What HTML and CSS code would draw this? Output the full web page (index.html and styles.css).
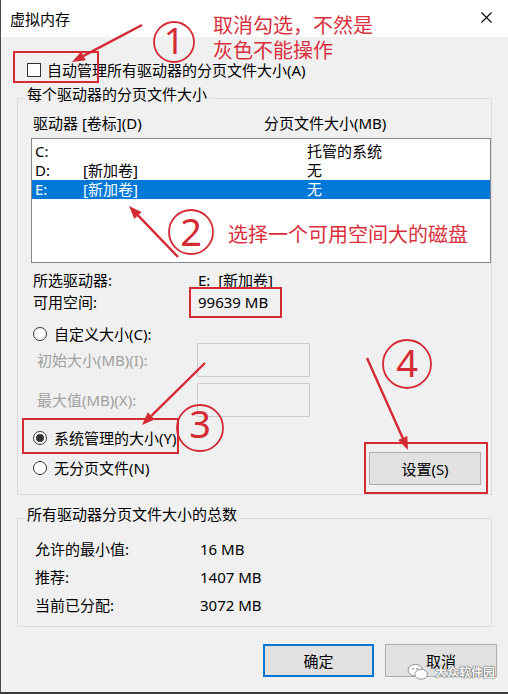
FILE: index.html
```html
<!DOCTYPE html>
<html lang="zh-CN">
<head>
<meta charset="utf-8">
<title>虚拟内存</title>
<link rel="stylesheet" href="styles.css">
</head>
<body>
<div class="window">
  <div class="titlebar">
    <span class="title">虚拟内存</span>
    <svg class="close" width="11" height="11" viewBox="0 0 11 11"><path d="M0.5 0.5 L10.5 10.5 M10.5 0.5 L0.5 10.5" stroke="#000" stroke-width="1.1" fill="none"/></svg>
  </div>

  <div class="check-row"><span class="checkbox"></span><span>自动管理所有驱动器的分页文件大小(A)</span></div>

  <div class="group group-drives">
    <div class="group-title">每个驱动器的分页文件大小</div>
    <div class="list-header"><span>驱动器 [卷标](D)</span><span>分页文件大小(MB)</span></div>
    <div class="listbox">
      <div class="row"><span>C:</span><span></span><span>托管的系统</span></div>
      <div class="row"><span>D:</span><span>[新加卷]</span><span>无</span></div>
      <div class="row selected"><span>E:</span><span>[新加卷]</span><span>无</span></div>
    </div>
    <div class="info">
      <span>所选驱动器:</span><span>E:&nbsp;&nbsp;[新加卷]</span>
      <span>可用空间:</span><span>99639 MB</span>
    </div>
    <div class="radio-row first-radio"><span class="radio"></span><span>自定义大小(C):</span></div>
    <div class="fields">
      <span class="disabled">初始大小(MB)(I):</span><span class="textbox"></span>
      <span class="disabled">最大值(MB)(X):</span><span class="textbox"></span>
    </div>
    <div class="bottom-row">
      <div class="radios">
        <div class="radio-row"><span class="radio checked"></span><span>系统管理的大小(Y)</span></div>
        <div class="radio-row"><span class="radio"></span><span>无分页文件(N)</span></div>
      </div>
      <button class="btn set-btn">设置(S)</button>
    </div>
  </div>

  <div class="group group-total">
    <div class="group-title">所有驱动器分页文件大小的总数</div>
    <div class="totals">
      <span>允许的最小值:</span><span>16 MB</span>
      <span>推荐:</span><span>1407 MB</span>
      <span>当前已分配:</span><span>3072 MB</span>
    </div>
  </div>

  <div class="actions">
    <button class="btn default-btn">确定</button>
    <button class="btn">取消</button>
  </div>
</div>

<svg class="annotations" width="508" height="694" viewBox="0 0 508 694">
  <g fill="none" stroke="#d42a34" stroke-width="2">
    <rect x="14" y="52" width="84" height="30"/>
    <rect x="190" y="288" width="91" height="29"/>
    <rect x="23" y="419" width="155" height="34"/>
    <rect x="365" y="443" width="122" height="50"/>
  </g>
  <g fill="none" stroke="#d42a34" stroke-width="1.8">
    <circle cx="174" cy="42" r="20"/>
    <circle cx="191" cy="232" r="22"/>
    <circle cx="200" cy="428" r="23"/>
    <circle cx="407" cy="364" r="24"/>
  </g>
  <g stroke="#d42a34" stroke-width="2.4" fill="none">
    <line x1="142" y1="25" x2="83.5" y2="55.9"/>
    <line x1="178" y1="257" x2="138" y2="215.4"/>
    <line x1="205" y1="363" x2="151.3" y2="415.9"/>
    <line x1="367" y1="358" x2="402.7" y2="438.1"/>
  </g>
  <g fill="#d42a34">
    <polygon points="72,62 81.2,51.5 85.8,60.3"/>
    <polygon points="129,206 141.6,211.9 134.4,218.9"/>
    <polygon points="142,425 147.8,412.3 154.8,419.5"/>
    <polygon points="408,450 398.1,440.1 407.3,436.1"/>
  </g>
  <g class="num" fill="#d42a34" text-anchor="middle">
    <text x="174" y="54" font-size="36">1</text>
    <text x="191" y="246" font-size="38">2</text>
    <text x="200" y="438" font-size="38">3</text>
    <text x="407" y="377" font-size="38">4</text>
  </g>
</svg>

<div class="note note-1">取消勾选，不然是<br>灰色不能操作</div>
<div class="note note-2">选择一个可用空间大的磁盘</div>

<div class="watermark">
  <svg width="22" height="18" viewBox="0 0 24 20"><ellipse cx="9" cy="8" rx="8" ry="6.5" fill="#fff" stroke="#8a8a8a" stroke-width="1"/><ellipse cx="15.5" cy="12.5" rx="7" ry="5.5" fill="#fff" stroke="#8a8a8a" stroke-width="1"/><circle cx="6.5" cy="6.5" r="1" fill="#8a8a8a"/><circle cx="11" cy="6.5" r="1" fill="#8a8a8a"/></svg>
  <span>大众软件园</span>
</div>
</body>
</html>
```
FILE: styles.css
```css
* { box-sizing: border-box; }
html, body { margin: 0; padding: 0; }
body {
  position: relative;
  width: 508px;
  height: 694px;
  overflow: hidden;
  background: #f0f0f0;
  font-family: "Noto Sans", "Noto Sans CJK SC", sans-serif;
  font-size: 15px;
  line-height: 20px;
  color: #000;
}
.window {
  height: 694px;
  border-left: 1px solid #4a4a4a;
  border-bottom: 2px solid #3a3a3a;
  background: #f0f0f0;
}
.titlebar {
  height: 37px;
  background: #fff;
  display: flex;
  align-items: center;
  justify-content: space-between;
  padding: 0 16px 0 9px;
}
.close { display: block; margin-top: -2px; }

.check-row {
  display: flex;
  align-items: center;
  gap: 6px;
  height: 20px;
  margin: 23px 0 0 26px;
}
.checkbox {
  width: 14px;
  height: 14px;
  border: 1px solid #333;
  background: #fff;
}

.group {
  width: 475px;
  margin: 18px 0 0 16px;
  border: 1px solid #dcdcdc;
}
.group-title {
  width: fit-content;
  margin: -15px 0 0 7px;
  padding: 0 2px;
  background: #f0f0f0;
  line-height: 20px;
}
.list-header {
  display: grid;
  grid-template-columns: 231px 1fr;
  height: 20px;
  margin: 9px 0 0 15px;
}
.listbox {
  width: 460px;
  height: 125px;
  margin: 5px 0 0 13px;
  padding-top: 3px;
  border: 1px solid #828790;
  background: #fff;
}
.row {
  display: grid;
  grid-template-columns: 48px 224px 1fr;
  height: 19px;
  line-height: 19px;
  padding-left: 3px;
}
.row.selected { background: #0078d7; color: #fff; }

.info {
  display: grid;
  grid-template-columns: 165px 1fr;
  grid-auto-rows: 22px;
  align-items: center;
  margin: 6px 0 0 15px;
}
.radio-row {
  display: flex;
  align-items: center;
  gap: 7px;
  height: 20px;
}
.first-radio { margin: 11px 0 0 15px; }
.radio {
  width: 14px;
  height: 14px;
  border: 1px solid #333;
  border-radius: 50%;
  background: #fff;
  display: flex;
  align-items: center;
  justify-content: center;
}
.radio.checked::after {
  content: "";
  width: 8px;
  height: 8px;
  border-radius: 50%;
  background: #333;
}
.fields {
  display: grid;
  grid-template-columns: 160px 113px;
  grid-auto-rows: 34px;
  row-gap: 6px;
  align-items: center;
  margin: -1px 0 0 19px;
}
.disabled { color: #a0a0a0; }
.textbox {
  height: 34px;
  border: 1px solid #cccccc;
  background: #f0f0f0;
}
.bottom-row {
  display: flex;
  justify-content: space-between;
  align-items: flex-end;
  margin-top: 11px;
  padding-left: 15px;
}
.radios {
  display: flex;
  flex-direction: column;
  gap: 10px;
  margin-bottom: 16px;
}
.btn {
  font: inherit;
  line-height: 20px;
  color: #000;
  background: #e1e1e1;
  border: 1px solid #adadad;
  padding: 0;
  height: 33px;
}
.set-btn { width: 112px; margin: 0 10px 9px 0; }

.group-total { margin-top: 23px; padding-bottom: 7px; }
.totals {
  display: grid;
  grid-template-columns: 165px 1fr;
  grid-auto-rows: 28px;
  align-items: center;
  margin: 11px 0 0 17px;
}

.actions {
  display: flex;
  justify-content: flex-end;
  gap: 11px;
  margin-top: 17px;
  padding-right: 11px;
}
.actions .btn { width: 112px; }
.actions .default-btn { width: 111px; border: 2px solid #0078d7; }

.annotations {
  position: absolute;
  left: 0;
  top: 0;
  pointer-events: none;
}
.num text { font-family: "Noto Sans", "Liberation Sans", sans-serif; }
.note {
  position: absolute;
  color: #d9303c;
  font-size: 20px;
  line-height: 25px;
  font-family: "Noto Sans CJK SC", sans-serif;
}
.note-1 { left: 213px; top: 12px; }
.note-2 { left: 228px; top: 221px; }

.watermark {
  position: absolute;
  left: 407px;
  top: 663px;
  display: flex;
  align-items: center;
  gap: 6px;
  color: #fff;
  font-family: "Noto Sans CJK SC", sans-serif;
  font-size: 12px;
  font-weight: bold;
  line-height: 16px;
  text-shadow: 0 0 1px #555, 0 0 1px #555, 0 0 1px #555;
}
```
